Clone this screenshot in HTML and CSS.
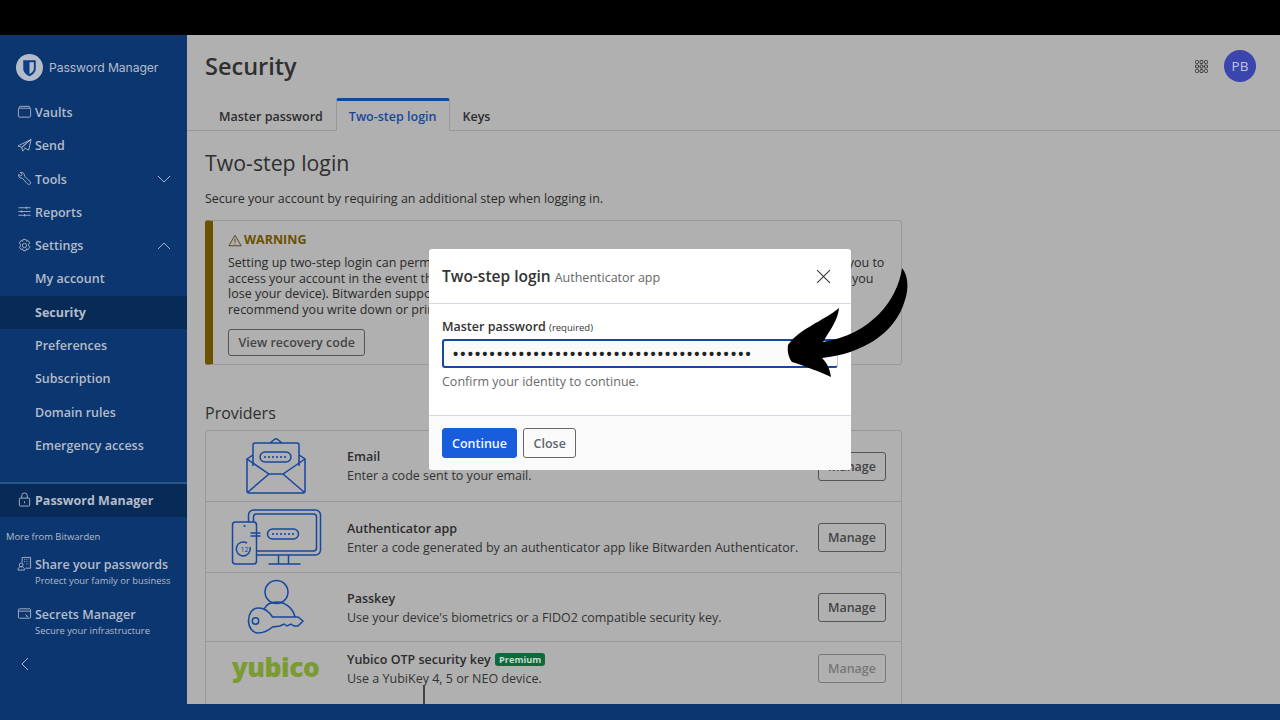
FILE: index.html
```html
<!DOCTYPE html>
<html lang="en">
<head>
    <meta charset="UTF-8">
    <meta name="viewport" content="width=device-width, initial-scale=1.0">
    <title>Security</title>
    <link rel="stylesheet" href="styles.css">
</head>
<body>
    <div class="topbar"></div>

    <div class="app">
        <!-- Left navigation -->
        <nav class="sidebar">
            <div class="brand">
                <svg class="brand-logo" viewBox="0 0 28 28">
                    <circle cx="14" cy="14" r="14" fill="#b4bcc9"/>
                    <path d="M7.500 6.500h13v8.500c0 4-3.200 6.600-6.500 8.200-3.300-1.600-6.500-4.200-6.500-8.200z" fill="#0e3f86"/>
                    <path d="M14 8.500h4.500v6.500c0 2.600-2.200 4.500-4.500 5.700z" fill="#b4bcc9"/>
                </svg>
                <span>Password Manager</span>
            </div>

            <a class="nav-item">
                <svg class="nav-icon" viewBox="0 0 16 16"><rect x="1.500" y="4.500" width="13" height="9.500" rx="1"/><path d="M3 2.500h10M2 4.500l1-2M14 4.500l-1-2"/></svg>
                Vaults
            </a>
            <a class="nav-item">
                <svg class="nav-icon" viewBox="0 0 16 16"><path d="M15 1.500 1 8.500l4 1.500zM15 1.500 5 10l1 4 2.500-3M15 1.500 12.500 13 8 10.500"/></svg>
                Send
            </a>
            <a class="nav-item">
                <svg class="nav-icon" viewBox="0 0 16 16"><path d="M3.500 1.500 5.500 3.500 4 5.500 1.800 3.500C1 6 3 8 5.500 7.500L11 13.500C12 15 14.500 14.500 14.500 12.500 14.500 11.500 14 11 13 10.500L8 5.500C8.500 3 6 1 3.500 1.500Z"/></svg>
                Tools
                <svg class="chevron" viewBox="0 0 14 8"><path d="M1 1l6 6 6-6"/></svg>
            </a>
            <a class="nav-item">
                <svg class="nav-icon" viewBox="0 0 16 16"><path d="M1.500 4h13M1.500 8h13M1.500 12h13M10 2.800v2.400M5 6.800v2.400M8 10.800v2.400"/></svg>
                Reports
            </a>
            <a class="nav-item">
                <svg class="nav-icon" viewBox="0 0 16 16"><path d="M6.500 1.500h3l.5 2 1.800-.8 1.800 2.500-1.300 1.500.1 1.600 1.300 1.500-1.800 2.500-1.800-.8-.5 2h-3l-.5-2-1.800.8-1.800-2.500 1.300-1.500-.1-1.600-1.300-1.500 1.800-2.500 1.800.8z"/><circle cx="8" cy="8" r="2.300"/></svg>
                Settings
                <svg class="chevron" viewBox="0 0 14 8"><path d="M1 7l6-6 6 6"/></svg>
            </a>
            <a class="nav-item">My account</a>
            <a class="nav-item active">Security</a>
            <a class="nav-item">Preferences</a>
            <a class="nav-item">Subscription</a>
            <a class="nav-item">Domain rules</a>
            <a class="nav-item">Emergency access</a>

            <a class="product-row">
                <svg class="nav-icon" viewBox="0 0 16 16"><rect x="2.500" y="6.500" width="11" height="8.500" rx="1"/><path d="M5 6.500V4a3 3 0 0 1 6 0v2.500M8 10v2"/></svg>
                Password Manager
            </a>

            <div class="more-label">More from Bitwarden</div>
            <a class="more-item">
                <svg class="nav-icon" viewBox="0 0 16 16"><path d="M5.500 7V1.500h9v11.500H9M7.500 3.500h1M10 3.500h1M12.500 3.500h.5M7.500 6h1M10 6h1M12.500 6h.5M10 8.500h1M12.500 8.500h.5"/><circle cx="4.500" cy="9.500" r="2"/><path d="M1 15c0-5 7-5 7 0z"/></svg>
                <span>
                    <span class="more-title">Share your passwords</span>
                    <span class="more-sub">Protect your family or business</span>
                </span>
            </a>
            <a class="more-item">
                <svg class="nav-icon" viewBox="0 0 16 16"><rect x="1.500" y="3" width="13" height="10" rx="1"/><path d="M1.500 5.500h13M9 9l1.500 1.500M10 11h2"/></svg>
                <span>
                    <span class="more-title">Secrets Manager</span>
                    <span class="more-sub">Secure your infrastructure</span>
                </span>
            </a>
            <svg class="collapse" viewBox="0 0 8 14"><path d="M7 1 1 7l6 6"/></svg>
        </nav>

        <!-- Page content (dimmed behind the dialog) -->
        <main class="main">
            <header class="page-header">
                <h1>Security</h1>
                <div class="header-right">
                    <svg class="apps-icon" viewBox="0 0 13 13">
                        <rect x="0.500" y="0.500" width="3" height="3" rx="1"/><rect x="5" y="0.500" width="3" height="3" rx="1"/><rect x="9.500" y="0.500" width="3" height="3" rx="1"/>
                        <rect x="0.500" y="5" width="3" height="3" rx="1"/><rect x="5" y="5" width="3" height="3" rx="1"/><rect x="9.500" y="5" width="3" height="3" rx="1"/>
                        <rect x="0.500" y="9.500" width="3" height="3" rx="1"/><rect x="5" y="9.500" width="3" height="3" rx="1"/><rect x="9.500" y="9.500" width="3" height="3" rx="1"/>
                    </svg>
                    <div class="avatar">PB</div>
                </div>
            </header>

            <div class="tabs">
                <a class="tab">Master password</a>
                <a class="tab tab-active">Two-step login</a>
                <a class="tab">Keys</a>
            </div>

            <section class="content">
                <h2>Two-step login</h2>
                <p class="lead">Secure your account by requiring an additional step when logging in.</p>

                <div class="warning">
                    <div class="warning-title">
                        <svg class="warning-icon" viewBox="0 0 16 14"><path d="M8 1 1 13h14zM8 5v4.500M8 10.800v.8"/></svg>
                        WARNING
                    </div>
                    <p class="warning-text">Setting up two-step login can permanently lock you out of your Bitwarden account. A recovery code allows you to access your account in the event that you can no longer use your normal two-step login provider (example: you lose your device). Bitwarden support will not be able to assist you if you lose access to your account. We recommend you write down or print the recovery code and keep it in a safe place.</p>
                    <button class="btn">View recovery code</button>
                </div>

                <h3>Providers</h3>
                <ul class="providers">
                    <li class="provider provider-email">
                        <div class="provider-logo">
                            <svg width="60" height="56" viewBox="0 0 60 56">
                                <path d="M1 21v32a2 2 0 0 0 2 2h54a2 2 0 0 0 2-2V21l-6-4M7 17l-6 4 22 15h14l22-15M2 54l21-18M58 54 37 36"/>
                                <path d="M7 28V7a2 2 0 0 1 2-2h42a2 2 0 0 1 2 2v21M24 5l5-4h2l5 4"/>
                                <rect x="14" y="14" width="31" height="10" rx="5"/>
                                <path class="dots" d="M19 19h.1M23 19h.1M27 19h.1M31 19h.1M35 19h.1M39 19h.1"/>
                            </svg>
                        </div>
                        <div class="provider-info">
                            <div class="provider-name">Email</div>
                            <div>Enter a code sent to your email.</div>
                        </div>
                        <button class="btn">Manage</button>
                    </li>
                    <li class="provider provider-auth">
                        <div class="provider-logo">
                            <svg width="90" height="56" viewBox="0 0 90 56">
                                <path d="M17.500 13V6a5 5 0 0 1 5-5h62a5 5 0 0 1 5 5v35a5 5 0 0 1-5 5H25.500"/>
                                <path d="M22.500 13V8a3 3 0 0 1 3-3h57a3 3 0 0 1 3 3v31a3 3 0 0 1-3 3H25.500M47.500 46v9M57.500 46v9M37.500 55h32"/>
                                <rect x="1.500" y="13" width="24" height="42" rx="3"/>
                                <rect x="36.500" y="20" width="31" height="10" rx="5"/>
                                <path class="dots" d="M42 25h.1M46 25h.1M50 25h.1M54 25h.1M58 25h.1M62 25h.1M13.500 17h.1"/>
                                <path d="M19.500 24h10M19.500 27h10"/>
                                <path d="M19 38a7 7 0 1 1-3-4"/>
                                <text class="clock-num" x="9.500" y="42.500">12</text>
                            </svg>
                        </div>
                        <div class="provider-info">
                            <div class="provider-name">Authenticator app</div>
                            <div>Enter a code generated by an authenticator app like Bitwarden Authenticator.</div>
                        </div>
                        <button class="btn">Manage</button>
                    </li>
                    <li class="provider provider-passkey">
                        <div class="provider-logo">
                            <svg width="56" height="54" viewBox="0 0 56 54">
                                <circle cx="28.500" cy="12" r="11.500"/>
                                <path d="M16 29C19 23 24 22 29 22 37 22 45 28 47 37"/>
                                <path d="M24.500 37C20 30 14 28 10.500 28 4 28 .5 34 .5 40.500 .5 48 5 53 10 53 17 53 21 50 24.500 47L32 46 36 44 39 46 43 44 46 46 50 46 55 41 50 37Z"/>
                                <circle cx="7.500" cy="41" r="3.200"/>
                            </svg>
                        </div>
                        <div class="provider-info">
                            <div class="provider-name">Passkey</div>
                            <div>Use your device's biometrics or a FIDO2 compatible security key.</div>
                        </div>
                        <button class="btn">Manage</button>
                    </li>
                    <li class="provider provider-yubico">
                        <div class="provider-logo yubico">yubico</div>
                        <div class="provider-info">
                            <div class="provider-name">Yubico OTP security key <span class="badge">Premium</span></div>
                            <div>Use a YubiKey 4, 5 or NEO device.</div>
                        </div>
                        <button class="btn btn-disabled">Manage</button>
                    </li>
                </ul>
            </section>
        </main>
    </div>

    <div class="bottombar"></div>

    <!-- Two-step dialog -->
    <div class="dialog">
        <div class="dialog-header">
            <span class="dialog-title">Two-step login</span>
            <span class="dialog-sub">Authenticator app</span>
            <svg class="dialog-close" viewBox="0 0 14 14"><path d="M1 1l12 12M13 1 1 13"/></svg>
        </div>
        <div class="dialog-body">
            <label class="field-label" for="masterPassword">Master password <small>(required)</small></label>
            <input class="field-input" type="password" id="masterPassword" value="00000000000000000000000000000000000000000">
            <div class="field-hint">Confirm your identity to continue.</div>
        </div>
        <div class="dialog-footer">
            <button class="btn btn-primary">Continue</button>
            <button class="btn btn-close">Close</button>
        </div>
    </div>

    <!-- Annotation arrow drawn on top of the screenshot -->
    <svg class="arrow" viewBox="0 0 1280 720">
        <path d="M902 268C898 300 870 335 823 342C830 330 838 320 839 308C822 322 800 328 788 345C787 352 789 358 792 362C805 366 820 372 831 377C830 370 828 364 822 358C860 354 895 335 905 300C909 288 908 275 902 268Z"/>
    </svg>
    <div class="cursor-line"></div>
</body>
</html>
```
FILE: styles.css
```css
* {
    box-sizing: border-box;
}

body {
    margin: 0;
    height: 720px;
    overflow: hidden;
    display: flex;
    flex-direction: column;
    font-family: "Open Sans", sans-serif;
    font-size: 12.5px;
    color: #2a2a2a;
    background: #0b3670;
}

.topbar {
    height: 35px;
    background: #000;
}

.bottombar {
    height: 16px;
    background: #0b3670;
}

.app {
    display: flex;
    height: 669px;
}

/* Sidebar */
.sidebar {
    width: 187px;
    flex-shrink: 0;
    display: flex;
    flex-direction: column;
    background: #0b3670;
    color: #b5bcc9;
}

.brand {
    display: flex;
    align-items: center;
    gap: 6px;
    height: 60.8px;
    padding: 4px 0 0 16px;
    font-family: "Inter", sans-serif;
    font-size: 12.2px;
    letter-spacing: -0.1px;
}

.brand-logo {
    width: 27px;
    height: 27px;
}

.nav-item {
    position: relative;
    display: flex;
    align-items: center;
    height: 33.3px;
    padding-left: 35px;
    font-size: 12.5px;
    font-weight: 600;
    flex-shrink: 0;
}

.nav-item.active {
    background: #082a57;
    font-weight: 700;
}

.nav-icon {
    position: absolute;
    left: 17px;
    top: 50%;
    width: 15px;
    height: 15px;
    margin-top: -8px;
    fill: none;
    stroke: #aab3c2;
    stroke-width: 1;
}

.chevron {
    position: absolute;
    right: 16px;
    top: 50%;
    width: 14px;
    height: 8px;
    margin-top: -4px;
    fill: none;
    stroke: #aab3c2;
    stroke-width: 1;
}

.product-row {
    position: relative;
    display: flex;
    align-items: center;
    height: 35px;
    margin-top: 19.7px;
    padding-left: 35px;
    border-top: 2px solid #2a5589;
    background: #082a57;
    font-size: 12.5px;
    font-weight: 700;
}

.more-label {
    margin-top: 13px;
    padding-left: 6px;
    font-size: 9.4px;
    line-height: 14px;
}

.more-item {
    position: relative;
    display: block;
    margin-top: 12px;
    padding-left: 35px;
    height: 37px;
}

.more-item + .more-item {
    margin-top: 13px;
}

.more-item .nav-icon {
    top: 0;
    margin-top: 0;
}

.more-title {
    display: block;
    font-size: 12.5px;
    font-weight: 600;
    line-height: 17px;
}

.more-sub {
    display: block;
    margin-top: 1px;
    font-size: 9.4px;
    line-height: 14px;
}

.collapse {
    width: 8px;
    height: 14px;
    margin: 14px 0 0 21px;
    fill: none;
    stroke: #aab3c2;
    stroke-width: 1;
}

/* Main area */
.main {
    flex: 1;
    overflow: hidden;
    background: #b0b0b0;
}

.page-header {
    display: flex;
    justify-content: space-between;
    align-items: center;
    height: 63px;
    padding: 0 24px 1px 18px;
}

h1 {
    margin: 0;
    font-size: 23.5px;
    font-weight: 600;
    color: #2f2f2f;
}

.header-right {
    display: flex;
    align-items: center;
    gap: 16px;
}

.apps-icon {
    width: 13px;
    height: 13px;
    fill: none;
    stroke: #333;
    stroke-width: 1;
}

.avatar {
    width: 32px;
    height: 32px;
    border-radius: 50%;
    display: flex;
    align-items: center;
    justify-content: center;
    background: #3a45ad;
    color: #c0c4dc;
    font-size: 13.5px;
}

.tabs {
    display: flex;
    height: 33px;
    padding-left: 19px;
    border-bottom: 1px solid #999;
}

.tab {
    display: flex;
    align-items: center;
    height: 33px;
    padding: 3px 13px 0;
    font-weight: 600;
    color: #2c2c2c;
}

.tab-active {
    color: #17479b;
    border: 1px solid #999;
    border-top: 3px solid #17479b;
    border-bottom: 1px solid #b0b0b0;
    border-radius: 3px 3px 0 0;
    padding: 1px 12px 0;
}

.content {
    padding: 0 18px;
    width: 733px;
}

h2 {
    margin: 17px 0 0;
    font-size: 21.3px;
    font-weight: 400;
    line-height: 30px;
    color: #2f2f2f;
}

.lead {
    margin: 12px 0 0;
    line-height: 18px;
}

.warning {
    margin-top: 12px;
    height: 145px;
    padding: 10px 10px 0 15px;
    border: 1px solid #999;
    border-left: 8px solid #6b5100;
    border-radius: 3px;
}

.warning-title {
    display: flex;
    align-items: center;
    gap: 2px;
    font-size: 12.5px;
    font-weight: 700;
    line-height: 18px;
    color: #6b5100;
}

.warning-icon {
    width: 14px;
    height: 13px;
    fill: none;
    stroke: #4a3a10;
    stroke-width: 1;
}

.warning-text {
    margin: 6px 0 0;
    line-height: 15.7px;
    width: 662px;
}

.btn {
    font-family: inherit;
    font-size: 12.5px;
    font-weight: 600;
    height: 29px;
    padding: 0 9.5px;
    background: transparent;
    border: 1px solid #555;
    border-radius: 3px;
    color: #444;
}

.warning .btn {
    display: block;
    margin-top: 11px;
    height: 27px;
}

h3 {
    margin: 37px 0 0;
    font-size: 16px;
    font-weight: 400;
    line-height: 22px;
    color: #2f2f2f;
}

.providers {
    margin: 6px 0 0;
    padding: 0;
    list-style: none;
    border: 1px solid #999;
    border-radius: 3px;
}

.provider {
    display: flex;
    align-items: center;
    padding-right: 15px;
    border-bottom: 1px solid #999;
}

.provider .btn {
    padding: 0 9px;
}

.provider:last-child {
    border-bottom: none;
}

.provider-email {
    height: 71px;
}

.provider-auth {
    height: 71px;
}

.provider-passkey {
    height: 69px;
}

.provider-yubico {
    height: 70px;
    align-items: flex-start;
    padding-top: 12px;
}

.provider-logo {
    width: 141px;
    padding-right: 2px;
    flex-shrink: 0;
    display: flex;
    justify-content: center;
}

.provider-logo svg {
    fill: none;
    stroke: #16479f;
    stroke-width: 1.5;
    overflow: visible;
}

.provider-logo .dots {
    stroke-width: 2;
    stroke-linecap: round;
}

.provider-logo .clock-num {
    fill: #16479f;
    stroke: none;
    font-size: 7px;
}

.yubico {
    font-family: "Open Sans", sans-serif;
    font-size: 26.5px;
    font-weight: 800;
    line-height: 26px;
    letter-spacing: -0.5px;
    color: #7c9a32;
}

.provider-info {
    flex: 1;
    line-height: 19px;
    color: #333;
}

.provider-auth .provider-info,
.provider-passkey .provider-info {
    padding-top: 2px;
}

.provider-yubico .provider-info {
    margin-top: -4px;
}

.provider-name {
    font-weight: 600;
    color: #2c2c2c;
}

.badge {
    display: inline-block;
    padding: 0 4px;
    margin-left: 1px;
    border-radius: 3px;
    background: #0c6b3a;
    color: #c9d8cf;
    font-size: 9.2px;
    font-weight: 700;
    line-height: 13px;
    vertical-align: 1px;
}

.btn-disabled {
    color: #777;
    border-color: #777;
}

/* Dialog */
.dialog {
    position: absolute;
    left: 429px;
    top: 249px;
    width: 422px;
    height: 221px;
    display: flex;
    flex-direction: column;
    background: #fff;
    border-radius: 3px;
}

.dialog-header {
    position: relative;
    display: flex;
    align-items: baseline;
    gap: 4px;
    height: 55px;
    padding: 16px 13px 0;
    border-bottom: 1px solid #d6d9e0;
}

.dialog-title {
    font-size: 15.5px;
    font-weight: 600;
    color: #333;
}

.dialog-sub {
    font-size: 12.5px;
    color: #666;
}

.dialog-close {
    position: absolute;
    right: 20px;
    top: 20px;
    width: 15px;
    height: 15px;
    fill: none;
    stroke: #333;
    stroke-width: 1;
}

.dialog-body {
    flex: 1;
    padding: 14px 13px 0;
}

.field-label {
    display: block;
    font-size: 12.5px;
    font-weight: 600;
    line-height: 17px;
    color: #333;
}

.field-label small {
    font-size: 9.5px;
    font-weight: 400;
}

.field-input {
    display: block;
    width: 396px;
    height: 29px;
    margin-top: 3px;
    padding: 0 8px;
    border: 2px solid #17479b;
    border-right: 1px solid #c8c8c8;
    border-radius: 3px;
    background: #fafafa;
    font-family: inherit;
    font-size: 19px;
    letter-spacing: 0.17px;
    color: #222;
    outline: none;
}

.field-hint {
    margin-top: 5px;
    font-size: 12.5px;
    line-height: 18px;
    color: #6a6a6a;
}

.dialog-footer {
    display: flex;
    align-items: center;
    gap: 6px;
    height: 55px;
    padding: 0 13px;
    border-top: 1px solid #d6d9e0;
    background: #fafafa;
    border-radius: 0 0 3px 3px;
}

.btn-primary {
    height: 30px;
    padding: 0 9px;
    background: #175ddc;
    border-color: #175ddc;
    color: #f4f7fd;
}

.btn-close {
    height: 30px;
    padding: 0 9.5px;
    color: #5f6670;
    border-color: #666;
}

.arrow {
    position: absolute;
    left: 0;
    top: 0;
    width: 1280px;
    height: 720px;
    fill: #000;
    pointer-events: none;
}

.cursor-line {
    position: absolute;
    left: 423px;
    top: 685px;
    width: 2px;
    height: 19px;
    background: #444;
}
```
